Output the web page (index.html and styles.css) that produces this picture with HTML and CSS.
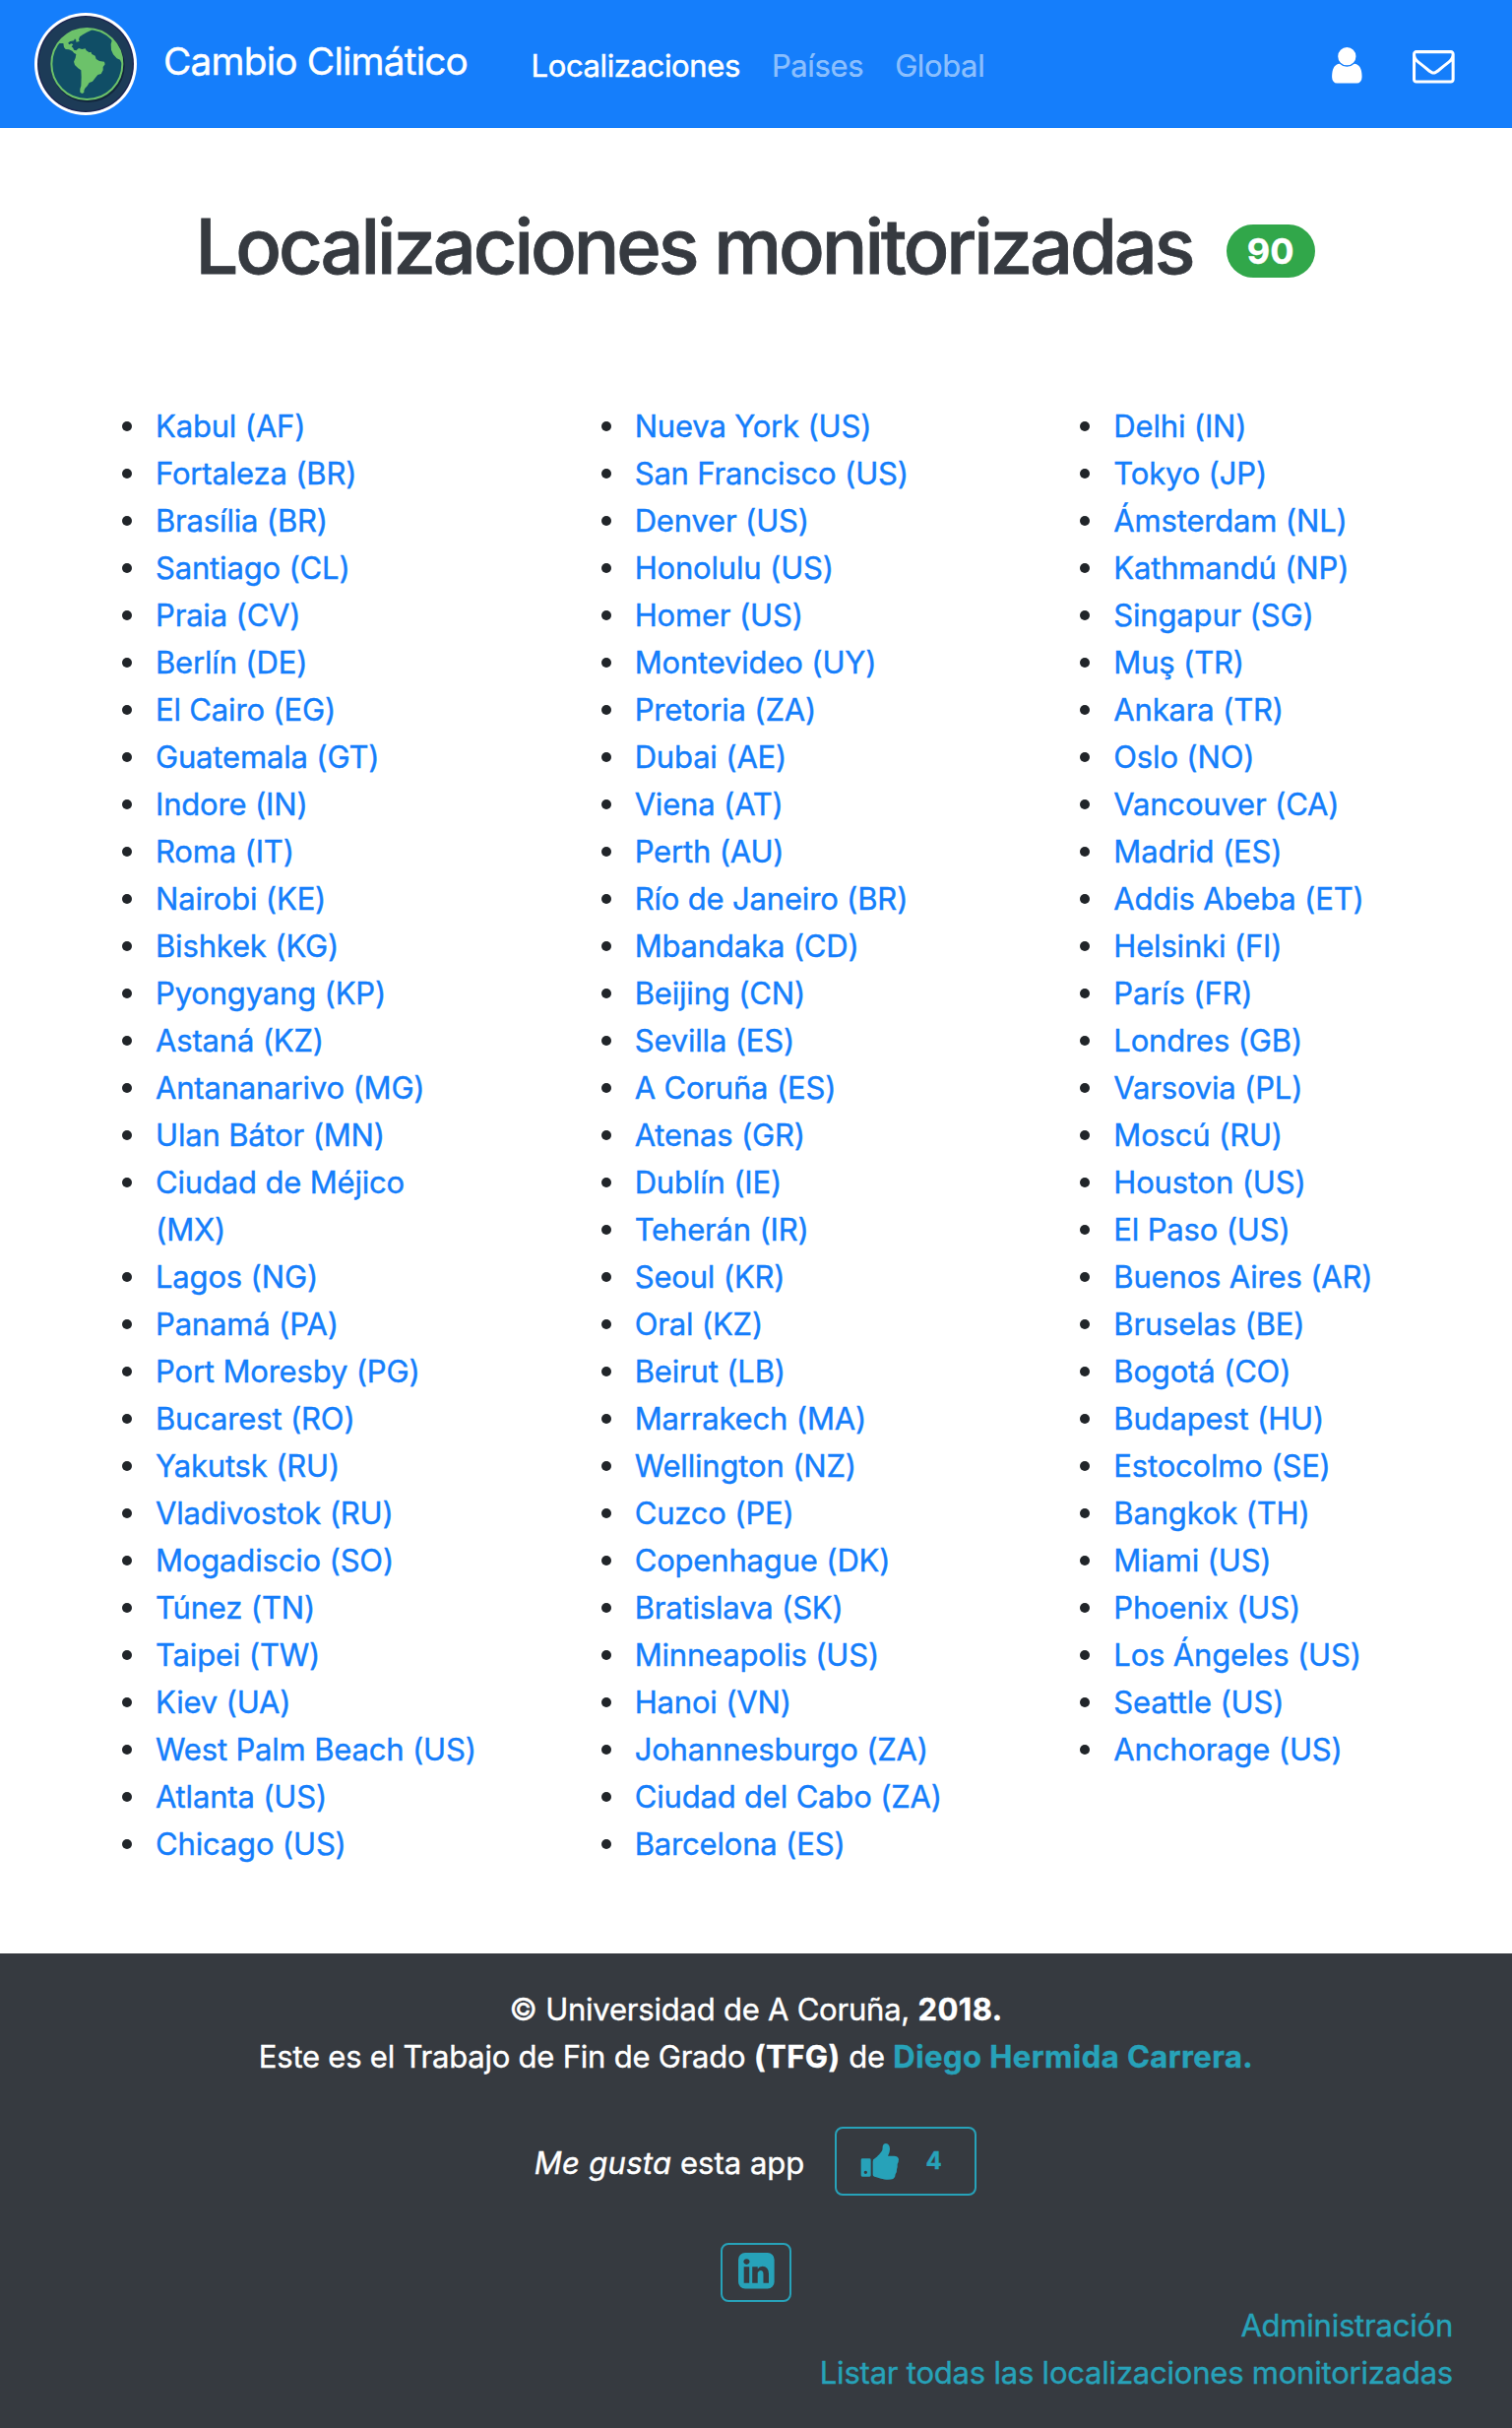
FILE: index.html
```
<!DOCTYPE html>
<html lang="es">
<head>
<meta charset="utf-8">
<title>Cambio Climático</title>
<link rel="stylesheet" href="styles.css">
</head>
<body>
<nav class="navbar">
  <svg class="logo" viewBox="42 36 318 318" aria-hidden="true">
    <defs><clipPath id="globe"><circle cx="205" cy="195" r="109"/></clipPath></defs>
    <circle cx="201" cy="195" r="156" fill="#fff"/>
    <circle cx="201" cy="195" r="147" fill="#1c2450"/>
    <circle cx="201" cy="195" r="143" fill="#1d3b57"/>
    <circle cx="208" cy="200" r="112" fill="#12263c"/>
    <circle cx="205" cy="195" r="109" fill="#104e66"/>
    <g clip-path="url(#globe)" fill="#6cc26a">
      <path d="M90 60H220L218 92 205 98 192 106 183 112 180 120 182 126 172 128 172 122 168 118 165 124 154 126 148 130 150 136 158 133 163 136 158 142 163 146 165 152 172 154 180 147 190 150 200 148 203 154 212 160 217 158 220 165 230 170 233 180 243 186 258 188 260 196 254 204 254 214 248 225 238 228 230 238 222 248 212 252 206 262 199 269 196 276 196 282 190 285 184 281 184 271 187 262 188 235 187 214 178 208 168 198 165 188 170 176 172 165 166 162 160 155 150 151 140 150 135 144 133 132 120 132Z"/>
      <path d="M276 108 281 124 278 134 279 152 285 166 296 178 306 182 309 190 330 190V100Z"/>
    </g>
    <circle cx="205" cy="195" r="108" fill="none" stroke="#6cc26a" stroke-width="6"/>
  </svg>
  <a class="brand">Cambio Climático</a>
  <div class="nav-links">
    <a class="nav-link active">Localizaciones</a>
    <a class="nav-link">Países</a>
    <a class="nav-link">Global</a>
  </div>
  <div class="nav-icons">
    <svg class="icon" viewBox="0 0 1792 1792"><path d="M1536 1399q0 109-62.500 187t-150.500 78h-854q-88 0-150.500-78t-62.500-187q0-85 8.500-160.500t31.500-152 58.500-131 94-89 134.500-34.500q131 128 313 128t313-128q76 0 134.500 34.500t94 89 58.500 131 31.500 152 8.500 160.500zm-256-887q0 159-112.500 271.500t-271.500 112.500-271.500-112.500-112.500-271.500 112.500-271.500 271.500-112.500 271.500 112.500 112.500 271.500z"/></svg>
    <svg class="icon" viewBox="0 0 1792 1792"><path d="M1664 1504v-768q-32 36-69 66-268 206-426 338-51 43-83 67t-86.500 48.500-102.500 24.500h-2q-48 0-102.500-24.500t-86.500-48.500-83-67q-158-132-426-338-37-30-69-66v768q0 13 9.500 22.500t22.500 9.500h1472q13 0 22.500-9.500t9.500-22.500zm0-1051v-24.500l-.5-13-3-12.500-5.500-9-9-7.500-14-2.500h-1472q-13 0-22.500 9.500t-9.500 22.500q0 168 147 284 193 152 401 317 6 5 35 29.500t46 37.500 44.500 31.500 50.500 27.500 43 9h2q20 0 43-9t50.500-27.500 44.500-31.500 46-37.500 35-29.500q208-165 401-317 54-43 100.500-115.500t46.500-131.500zm128-37v1088q0 66-47 113t-113 47h-1472q-66 0-113-47t-47-113v-1088q0-66 47-113t113-47h1472q66 0 113 47t47 113z"/></svg>
  </div>
</nav>

<main>
  <header class="page-title">
    <h1>Localizaciones monitorizadas</h1>
    <span class="badge">90</span>
  </header>
  <div class="columns">
    <ul>
      <li><a>Kabul (AF)</a></li><li><a>Fortaleza (BR)</a></li><li><a>Brasília (BR)</a></li><li><a>Santiago (CL)</a></li><li><a>Praia (CV)</a></li><li><a>Berlín (DE)</a></li><li><a>El Cairo (EG)</a></li><li><a>Guatemala (GT)</a></li><li><a>Indore (IN)</a></li><li><a>Roma (IT)</a></li><li><a>Nairobi (KE)</a></li><li><a>Bishkek (KG)</a></li><li><a>Pyongyang (KP)</a></li><li><a>Astaná (KZ)</a></li><li><a>Antananarivo (MG)</a></li><li><a>Ulan Bátor (MN)</a></li><li><a>Ciudad de Méjico (MX)</a></li><li><a>Lagos (NG)</a></li><li><a>Panamá (PA)</a></li><li><a>Port Moresby (PG)</a></li><li><a>Bucarest (RO)</a></li><li><a>Yakutsk (RU)</a></li><li><a>Vladivostok (RU)</a></li><li><a>Mogadiscio (SO)</a></li><li><a>Túnez (TN)</a></li><li><a>Taipei (TW)</a></li><li><a>Kiev (UA)</a></li><li><a>West Palm Beach (US)</a></li><li><a>Atlanta (US)</a></li><li><a>Chicago (US)</a></li>
    </ul>
    <ul>
      <li><a>Nueva York (US)</a></li><li><a>San Francisco (US)</a></li><li><a>Denver (US)</a></li><li><a>Honolulu (US)</a></li><li><a>Homer (US)</a></li><li><a>Montevideo (UY)</a></li><li><a>Pretoria (ZA)</a></li><li><a>Dubai (AE)</a></li><li><a>Viena (AT)</a></li><li><a>Perth (AU)</a></li><li><a>Río de Janeiro (BR)</a></li><li><a>Mbandaka (CD)</a></li><li><a>Beijing (CN)</a></li><li><a>Sevilla (ES)</a></li><li><a>A Coruña (ES)</a></li><li><a>Atenas (GR)</a></li><li><a>Dublín (IE)</a></li><li><a>Teherán (IR)</a></li><li><a>Seoul (KR)</a></li><li><a>Oral (KZ)</a></li><li><a>Beirut (LB)</a></li><li><a>Marrakech (MA)</a></li><li><a>Wellington (NZ)</a></li><li><a>Cuzco (PE)</a></li><li><a>Copenhague (DK)</a></li><li><a>Bratislava (SK)</a></li><li><a>Minneapolis (US)</a></li><li><a>Hanoi (VN)</a></li><li><a>Johannesburgo (ZA)</a></li><li><a>Ciudad del Cabo (ZA)</a></li><li><a>Barcelona (ES)</a></li>
    </ul>
    <ul>
      <li><a>Delhi (IN)</a></li><li><a>Tokyo (JP)</a></li><li><a>Ámsterdam (NL)</a></li><li><a>Kathmandú (NP)</a></li><li><a>Singapur (SG)</a></li><li><a>Muş (TR)</a></li><li><a>Ankara (TR)</a></li><li><a>Oslo (NO)</a></li><li><a>Vancouver (CA)</a></li><li><a>Madrid (ES)</a></li><li><a>Addis Abeba (ET)</a></li><li><a>Helsinki (FI)</a></li><li><a>París (FR)</a></li><li><a>Londres (GB)</a></li><li><a>Varsovia (PL)</a></li><li><a>Moscú (RU)</a></li><li><a>Houston (US)</a></li><li><a>El Paso (US)</a></li><li><a>Buenos Aires (AR)</a></li><li><a>Bruselas (BE)</a></li><li><a>Bogotá (CO)</a></li><li><a>Budapest (HU)</a></li><li><a>Estocolmo (SE)</a></li><li><a>Bangkok (TH)</a></li><li><a>Miami (US)</a></li><li><a>Phoenix (US)</a></li><li><a>Los Ángeles (US)</a></li><li><a>Seattle (US)</a></li><li><a>Anchorage (US)</a></li>
    </ul>
  </div>
</main>

<footer class="footer">
  <p class="credits">© Universidad de A Coruña, <b>2018.</b></p>
  <p class="credits">Este es el Trabajo de Fin de Grado <b>(TFG)</b> de <b class="author">Diego Hermida Carrera.</b></p>
  <div class="like-row">
    <span class="like-text"><em>Me gusta</em> esta app</span>
    <button class="like-button">
      <svg class="thumb" viewBox="28 22 120 116"><path fill-rule="evenodd" d="M34 71H56Q60 71 60 75V122Q60 126 56 126H34Q30 126 30 122V75Q30 71 34 71ZM44 108A5 5 0 1 0 44 118A5 5 0 1 0 44 108Z"/><path d="M66 80Q66 73 72 71C79 65 91 54 95 45Q96 40 96 34Q98 25 106 25C114 26 118 33 118 42Q118 52 112 63H131Q142 63 145 73Q145 81 141 88Q142 97 139 104Q140 112 135 119Q135 129 128 133Q122 135 113 135C95 135 86 129 71 126Q66 125 66 120Z"/></svg>
      <span>4</span>
    </button>
  </div>
  <div class="social">
    <a class="social-button"><svg class="icon" viewBox="0 0 1792 1792"><path d="M365 1414h231v-694h-231v694zm246-908q-1-52-36-86t-93-34-94.500 34-36.500 86q0 51 35.500 85.500t92.500 34.500h1q59 0 95-34.500t36-85.500zm585 908h231v-398q0-154-73-233t-193-79q-136 0-209 117h2v-101h-231q3 66 0 694h231v-388q0-38 7-56 15-35 45-59.500t74-24.500q116 0 116 157v371zm468-998v960q0 119-84.500 203.500t-203.500 84.500h-960q-119 0-203.500-84.500t-84.500-203.500v-960q0-119 84.500-203.500t203.500-84.500h960q119 0 203.500 84.500t84.500 203.500z"/></svg></a>
  </div>
  <div class="footer-links">
    <a>Administración</a>
    <a>Listar todas las localizaciones monitorizadas</a>
  </div>
</footer>
</body>
</html>
```
FILE: styles.css
```
* { box-sizing: border-box; }
body {
  margin: 0;
  background: #fff;
  color: #212529;
  font: 400 31px/48px Inter, "Liberation Sans", sans-serif;
  -webkit-text-stroke: 0.4px currentColor;
}
h1, p, ul { margin: 0; }

.navbar {
  display: flex;
  align-items: center;
  height: 130px;
  padding: 0 58px 0 34px;
  background: #157efb;
  color: #fff;
}
.logo { width: 106px; height: 106px; }
.brand {
  margin: 0 0 6px 26px;
  font-size: 38.8px;
  line-height: 60px;
  letter-spacing: -0.8px;
}
.nav-links {
  display: flex;
  gap: 32px;
  margin: 4px 0 0 64.5px;
  letter-spacing: -0.38px;
}
.nav-link { color: rgba(255, 255, 255, 0.5); -webkit-text-stroke-width: 0.2px; }
.nav-link.active { color: #fff; -webkit-text-stroke-width: 0.5px; }
.nav-icons {
  display: flex;
  gap: 46px;
  margin: 3px 0 0 auto;
}
.icon {
  display: block;
  width: 42.67px;
  height: 42.67px;
  fill: currentColor;
}

.page-title {
  display: flex;
  justify-content: center;
  align-items: center;
  gap: 34px;
  padding: 72px 2px 0 0;
  color: #363a40;
}
h1 {
  font-size: 77.6px;
  font-weight: 500;
  line-height: 96px;
  letter-spacing: -3.07px;
  -webkit-text-stroke-width: 0.8px;
}
.badge {
  margin-top: 10px;
  padding: 9px 21.2px;
  border-radius: 27px;
  background: #31a74a;
  color: #fff;
  font-size: 36px;
  font-weight: 700;
  line-height: 36px;
}

.columns {
  display: grid;
  grid-template-columns: repeat(3, 486.67px);
  padding: 111px 0 87px 78px;
}
ul {
  padding: 0 78px 0 80px;
  letter-spacing: -0.17px;
  list-style: none;
}
li { position: relative; }
li::before {
  content: "";
  position: absolute;
  left: -34px;
  top: 19px;
  width: 10px;
  height: 10px;
  border-radius: 50%;
  background: #212529;
}
li a { color: #157efb; }

.footer {
  height: 482px;
  padding-top: 33px;
  background: #363a40;
  color: #fff;
}
.credits {
  text-align: center;
  letter-spacing: -0.22px;
}
.credits b { letter-spacing: 0.45px; }
.author { color: #27a2b9; }
.like-row {
  display: flex;
  justify-content: center;
  align-items: center;
  gap: 31px;
  margin: 47px 1px 0 0;
}
.like-text { margin-top: 3px; }
.like-text em { letter-spacing: 0.3px; }
.like-button {
  display: flex;
  align-items: center;
  width: 144px;
  height: 70px;
  padding: 0 0 0 23.3px;
  border: 2px solid #27a2b9;
  border-radius: 8px;
  background: transparent;
  color: #27a2b9;
  font: 700 24px/36px Inter, sans-serif;
}
.like-button span { margin-left: 27px; }
.thumb {
  width: 40px;
  height: 38.67px;
  fill: currentColor;
}
.social {
  display: flex;
  justify-content: center;
  margin-top: 48px;
}
.social-button {
  display: flex;
  justify-content: center;
  align-items: center;
  width: 72px;
  height: 60px;
  padding-bottom: 3px;
  border: 2px solid #27a2b9;
  border-radius: 8px;
  color: #27a2b9;
}
.footer-links {
  display: flex;
  flex-direction: column;
  align-items: flex-end;
  padding-right: 60px;
  color: #27a2b9;
  letter-spacing: -0.21px;
}
```
